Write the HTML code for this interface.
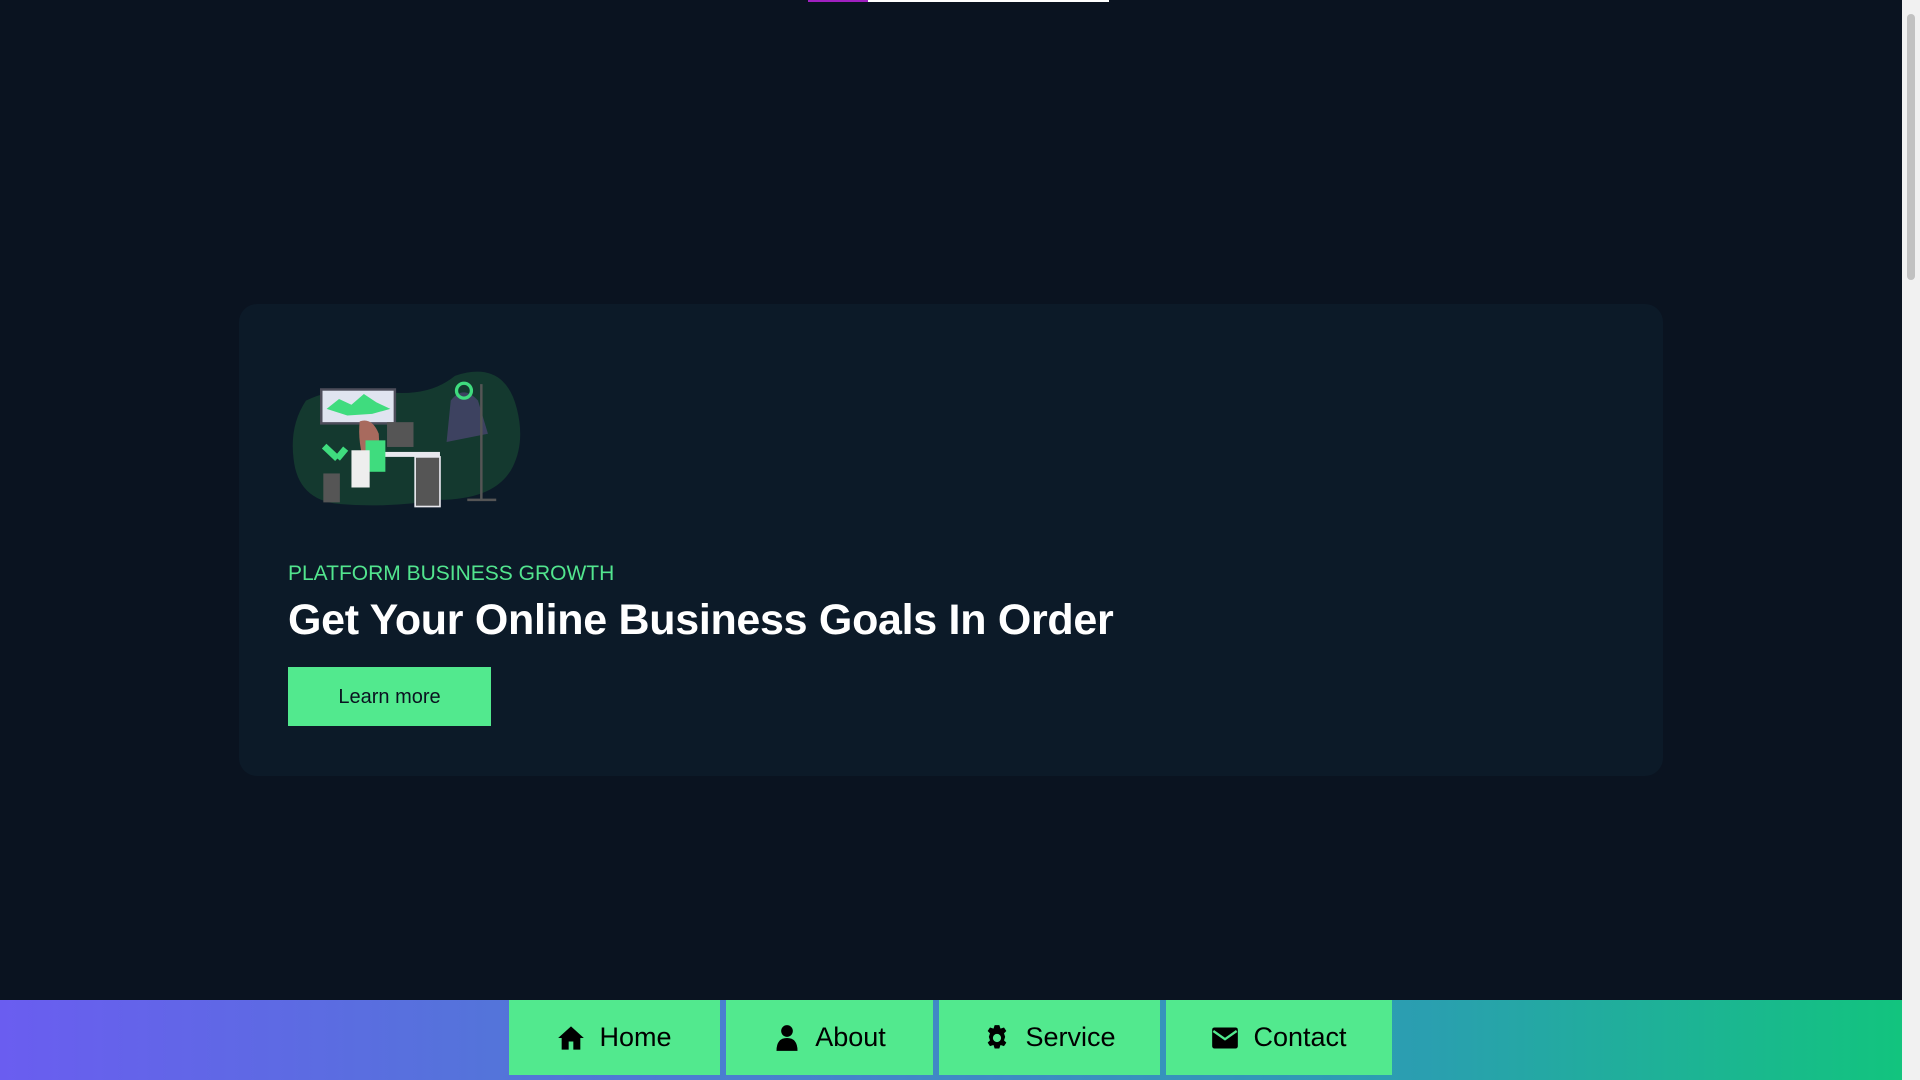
<!DOCTYPE html>
<html><head><style>
*{margin:0;padding:0;box-sizing:border-box}
body{width:1920px;height:1080px;background:#0a1320;font-family:"Liberation Sans",sans-serif;overflow:hidden;position:relative}
.sb{position:absolute;right:0;top:0;width:18px;height:1080px;background:#f1f1f1}
.sb i{position:absolute;left:5px;top:14px;width:8px;height:266px;background:#c1c1c1;border-radius:4px}
.bar{position:absolute;top:0;left:808px;width:301px;height:2px;background:#fff}
.bar i{position:absolute;left:0;top:0;width:60px;height:2px;background:#a020c0}
.card{position:absolute;left:239px;top:304px;width:1424px;height:472px;background:#0c1a28;border-radius:18px}
.sub{position:absolute;left:288px;top:562px;color:#52e58e;font-size:21px}
h1{position:absolute;left:288px;top:596px;color:#fff;font-size:43px;font-weight:bold;letter-spacing:-0.3px}
.btn{position:absolute;left:288px;top:667px;width:203px;height:59px;background:#52e98e;color:#0a1320;font-size:20px;text-align:center;line-height:60px}
.nav{position:absolute;left:0;top:1000px;width:1902px;height:80px;background:linear-gradient(90deg,#6a5df0,#2a9fb0 75%,#12c47e)}
.nb{position:absolute;top:0;height:75px;background:#52e98e;color:#000;font-size:27px;display:flex;align-items:center;justify-content:center;gap:14px}
.nb svg{width:28px;height:28px}
</style></head><body>
<div class="bar"><i></i></div>
<div class="card"></div>
<svg style="position:absolute;left:288px;top:351px" width="251" height="182" viewBox="0 0 300 220">
<path d="M20 60 Q60 40 120 50 Q170 55 200 30 Q260 10 275 70 Q285 110 270 140 Q250 180 180 180 Q120 190 60 185 Q10 180 5 130 Q0 90 20 60Z" fill="#14392f"/>
<rect x="37" y="45" width="92" height="44" fill="#4d4d5a"/><rect x="40" y="48" width="86" height="38" fill="#e0e4f0"/>
<path d="M45 70 L60 58 L75 65 L90 52 L105 62 L122 70 L100 76 L70 78Z" fill="#3fdc7e"/>
<rect x="118" y="86" width="32" height="30" fill="#555"/><rect x="112" y="122" width="70" height="6" fill="#e8e8ee"/>
<rect x="152" y="128" width="30" height="60" fill="#555" stroke="#e8e8ee" stroke-width="2"/>
<path d="M85 85 Q100 80 108 100 L110 140 L92 140 Q82 110 85 85Z" fill="#a86a5e"/>
<rect x="92" y="108" width="24" height="38" fill="#3fdc7e"/>
<rect x="75" y="120" width="22" height="45" fill="#eee"/>
<path d="M58 130 L42 115 M58 130 L68 118" stroke="#3fdc7e" stroke-width="8"/>
<rect x="41" y="148" width="20" height="35" fill="#555"/>
<path d="M195 60 Q210 40 228 60 L240 100 L190 110Z" fill="#3d4260"/>
<circle cx="211" cy="48" r="9" fill="none" stroke="#3fdc7e" stroke-width="4"/>
<path d="M232 40 L232 180 M215 180 L250 180" stroke="#555" stroke-width="3"/>
</svg>
<div class="sub">PLATFORM BUSINESS GROWTH</div>
<h1>Get Your Online Business Goals In Order</h1>
<div class="btn">Learn more</div>
<div class="nav">
<div class="nb" style="left:509px;width:211px"><svg viewBox="0 0 24 24"><path d="M12 2L1 12h3v10h6v-7h4v7h6V12h3z"/></svg>Home</div>
<div class="nb" style="left:726px;width:207px"><svg viewBox="0 0 24 24"><circle cx="12" cy="6" r="5"/><path d="M3 23q0-11 9-11t9 11z"/></svg>About</div>
<div class="nb" style="left:939px;width:221px"><svg viewBox="0 0 24 24"><path d="M10 1h4l1 3 3-1 2 3-2 2 1 3-1 3 2 2-2 3-3-1-1 3h-4l-1-3-3 1-2-3 2-2-1-3 1-3-2-2 2-3 3 1z"/><circle cx="12" cy="12" r="3.5" fill="#52e98e"/></svg>Service</div>
<div class="nb" style="left:1166px;width:226px"><svg viewBox="0 0 24 24"><rect x="1" y="3" width="22" height="18" rx="2"/><path d="M2 6l10 7 10-7" stroke="#52e98e" stroke-width="2" fill="none"/></svg>Contact</div>
</div>
<div class="sb"><i></i></div>
</body></html>
